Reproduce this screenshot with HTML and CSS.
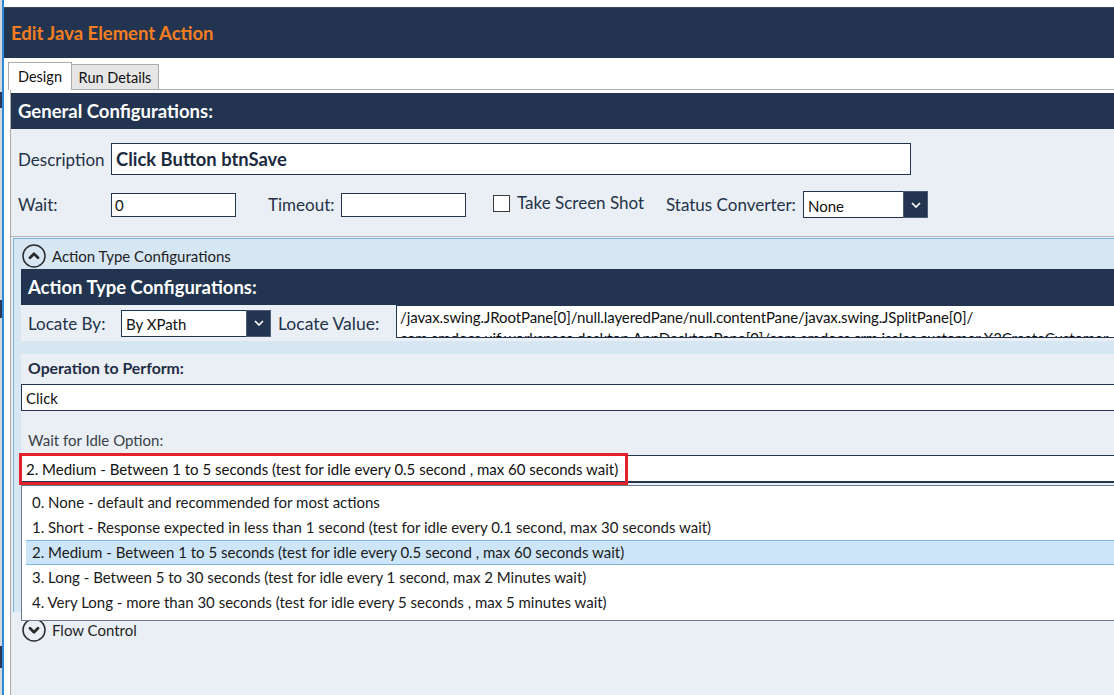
FILE: index.html
```html
<!DOCTYPE html>
<html>
<head>
<meta charset="utf-8">
<title>Edit Java Element Action</title>
<link rel="stylesheet" href="styles.css">
</head>
<body>
<div class="screen">
  <div class="desk"></div>
  <div class="desk-line"></div>
  <div class="window">
    <div class="top-gap"></div>
    <div class="titlebar"><span class="title">Edit Java Element Action</span></div>
    <div class="tabs">
      <div class="tab tab-design">Design</div>
      <div class="tab tab-run">Run Details</div>
      <div class="tab-rest"></div>
    </div>
    <div class="tabbody">
      <div class="content">
        <div class="bar">General Configurations:</div>
        <div class="general">
          <div class="row desc-row">
            <span class="lbl w93">Description</span>
            <div class="input desc-input">Click Button btnSave</div>
          </div>
          <div class="row opts-row">
            <span class="lbl w93">Wait:</span>
            <div class="input small">0</div>
            <span class="lbl lbl-timeout">Timeout:</span>
            <div class="input small"></div>
            <span class="check"></span>
            <span class="lbl lbl-shot">Take Screen Shot</span>
            <span class="lbl lbl-status">Status Converter:</span>
            <div class="select sel-status">
              <span class="sel-val">None</span>
              <span class="sel-btn"><svg viewBox="0 0 10 6" width="10" height="6"><path d="M1 1 L5 5 L9 1" fill="none" stroke="#ffffff" stroke-width="1.7"/></svg></span>
            </div>
          </div>
        </div>

        <div class="expander">
          <div class="exp-head">
            <svg class="circ" viewBox="0 0 24 24" width="24" height="24"><circle cx="12" cy="12" r="11" fill="none" stroke="#2b2b2b" stroke-width="1.5"/><path d="M8 13.8 L12 9.8 L16 13.8" fill="none" stroke="#2b2b2b" stroke-width="2.8" stroke-linecap="round" stroke-linejoin="round"/></svg>
            <span class="exp-title">Action Type Configurations</span>
          </div>
          <div class="exp-body">
            <div class="bar">Action Type Configurations:</div>
            <div class="locate-row">
              <span class="lbl w93">Locate By:</span>
              <div class="select sel-locate">
                <span class="sel-val">By XPath</span>
                <span class="sel-btn"><svg viewBox="0 0 10 6" width="10" height="6"><path d="M1 1 L5 5 L9 1" fill="none" stroke="#ffffff" stroke-width="1.7"/></svg></span>
              </div>
              <span class="lbl lbl-locval">Locate Value:</span>
              <div class="loc-value">
                <div class="loc-line">/javax.swing.JRootPane[0]/null.layeredPane/null.contentPane/javax.swing.JSplitPane[0]/</div>
                <div class="loc-line">com.amdocs.uif.workspace.desktop.AppDesktopPane[0]/com.amdocs.crm.isales.customer.X3CreateCustomer</div>
              </div>
            </div>
            <div class="gap"></div>
            <div class="op-panel">
              <div class="op-label">Operation to Perform:</div>
              <div class="op-input">Click</div>
              <div class="idle-label">Wait for Idle Option:</div>
              <div class="combo-wrap">
                <div class="combo">2. Medium - Between 1 to 5 seconds (test for idle every 0.5 second , max 60 seconds wait)</div>
                <ul class="dropdown">
                  <li class="item">0. None - default and recommended for most actions</li>
                  <li class="item">1. Short - Response expected in less than 1 second (test for idle every 0.1 second, max 30 seconds wait)</li>
                  <li class="item selected">2. Medium - Between 1 to 5 seconds (test for idle every 0.5 second , max 60 seconds wait)</li>
                  <li class="item">3. Long - Between 5 to 30 seconds (test for idle every 1 second, max 2 Minutes wait)</li>
                  <li class="item">4. Very Long - more than 30 seconds (test for idle every 5 seconds , max 5 minutes wait)</li>
                </ul>
                <div class="red-box"></div>
              </div>
            </div>
          </div>
        </div>

        <div class="exp-head flow">
          <svg class="circ" viewBox="0 0 24 24" width="24" height="24"><circle cx="12" cy="12" r="11" fill="none" stroke="#2b2b2b" stroke-width="1.5"/><path d="M8 10.2 L12 14.2 L16 10.2" fill="none" stroke="#2b2b2b" stroke-width="2.8" stroke-linecap="round" stroke-linejoin="round"/></svg>
          <span class="exp-title">Flow Control</span>
        </div>
      </div>
    </div>
  </div>
</div>
</body>
</html>
```
FILE: styles.css
```css
* { box-sizing: border-box; margin: 0; padding: 0; }
html, body { width: 1114px; height: 695px; overflow: hidden; background: #ffffff; }
body { font-family: Lato, "Open Sans", sans-serif; color: #1f2d44; }

.screen { display: flex; height: 695px; overflow: hidden; }
.desk {
  width: 2px;
  background: linear-gradient(to bottom,
    #d4d8dd 0, #d4d8dd 92px, #2a3a55 92px, #2a3a55 108px,
    #d4d8dd 108px, #d4d8dd 300px, #2a3a55 300px, #2a3a55 318px,
    #d4d8dd 318px, #d4d8dd 646px, #2a3a55 646px, #2a3a55 668px, #d4d8dd 668px);
}
.desk-line { width: 2px; background: #3089d9; }
.window { flex: 1; min-width: 0; display: flex; flex-direction: column; background: #ffffff; overflow: hidden; }

.top-gap { height: 7px; }
.titlebar {
  height: 51px; border-top: 1px solid #3d4859; background: #22344f;
  display: flex; align-items: center; padding-left: 7px;
}
.title { color: #f47e20; font-weight: 700; font-size: 18.5px; }

.tabs { height: 32px; display: flex; align-items: flex-end; padding-left: 4px; }
.tab { display: flex; align-items: center; justify-content: center; font-size: 14.5px; color: #111111; }
.tab-design { width: 64px; height: 28px; border: 1px solid #acacac; border-bottom: none; background: #ffffff; padding-bottom: 1px; }
.tab-run { width: 87px; height: 26px; border: 1px solid #acacac; border-left: none; background: #e6e6e6; }
.tab-rest { flex: 1; height: 1px; background: #acacac; }

.tabbody {
  flex: 1; min-height: 0; margin-left: 6px; border-left: 1px solid #a9a9a9;
  padding-top: 3px; display: flex; flex-direction: column; background: #ffffff;
}
.content { flex: 1; background: #eaeff5; overflow: hidden; }

.bar {
  height: 36px; background: #22344f; color: #ffffff; font-weight: 700; font-size: 18.5px;
  display: flex; align-items: center; padding-left: 7px; white-space: nowrap;
}

.general { padding: 14px 0 18px 7px; border-bottom: 1px solid #b3b3b3; }
.row { display: flex; align-items: center; white-space: nowrap; }
.desc-row { height: 32px; }
.opts-row { margin-top: 16px; height: 27px; }
.lbl { font-size: 17px; color: #243249; flex-shrink: 0; }
.w93 { width: 93px; }
.lbl-timeout { margin-left: 32px; width: 73px; }
.lbl-shot { margin-left: 7px; width: 149px; margin-bottom: 4px; }
.lbl-status { width: 137px; }
.lbl-locval { margin-left: 7px; width: 118px; font-size: 17.5px; }

.input { background: #ffffff; border: 1px solid #22344f; flex-shrink: 0; display: flex; align-items: center; }
.desc-input { width: 800px; height: 32px; font-weight: 700; font-size: 18.4px; padding-left: 4px; color: #1c2a40; }
.small { width: 125px; height: 24px; font-size: 15px; padding-left: 3px; color: #111111; }

.check { width: 17px; height: 17px; margin-left: 27px; margin-bottom: 3px; border: 1px solid #3a3a3a; background: #ffffff; flex-shrink: 0; }

.select { display: flex; height: 27px; border: 1px solid #22344f; flex-shrink: 0; background: #ffffff; }
.sel-status { width: 125px; }
.sel-locate { width: 150px; }
.sel-val { flex: 1; display: flex; align-items: center; padding-left: 4px; font-size: 15px; color: #111111; padding-top: 2px; }
.sel-btn {
  width: 25px; background: #22344f; border: 1px solid #4d5c73; margin: -1px -1px -1px 0;
  display: flex; align-items: center; justify-content: center;
}

.expander {
  margin: 1px 0 0 2px; border-top: 1px solid #7ab4e0; border-left: 1px solid #7ab4e0;
  background: #d6e6f3; padding-bottom: 6px;
}
.exp-head { height: 30px; display: flex; align-items: flex-end; padding: 0 0 1px 8px; }
.circ { flex-shrink: 0; display: block; }
.exp-title { margin-left: 6px; font-size: 15px; line-height: 24px; color: #1f1f1f; }
.flow { height: 30px; padding: 0 0 0 11px; }

.exp-body { margin-left: 7px; }
.locate-row { height: 36px; background: #eaeff5; display: flex; align-items: center; padding-left: 7px; white-space: nowrap; overflow: hidden; }
.loc-value {
  width: 760px; height: 33px; flex-shrink: 0; margin-top: -3px; border: 1px solid #22344f; background: #ffffff;
  overflow: hidden; font-size: 15px; line-height: 21px; padding: 1px 0 0 3px; color: #111111;
}
.loc-line { white-space: nowrap; letter-spacing: -0.1px; }

.gap { height: 13px; }
.op-panel { background: #eaeff5; height: 252px; padding-top: 4px; }
.op-label { font-weight: 700; font-size: 15.8px; line-height: 20px; padding-left: 7px; color: #1f2d44; }
.op-input {
  width: 1110px; height: 27px; margin-top: 6px; background: #ffffff; border: 1px solid #22344f;
  font-size: 15px; padding-left: 4px; display: flex; align-items: center; color: #111111;
}
.idle-label { margin-top: 19px; line-height: 20px; padding-left: 7px; font-size: 15px; color: #3b3f46; }
.combo-wrap { position: relative; margin-top: 5px; }
.combo {
  width: 1110px; height: 28px; background: #ffffff; border: 1px solid #22344f; border-bottom-width: 2px;
  font-size: 15px; padding-left: 4px; display: flex; align-items: center; color: #111111; white-space: nowrap;
}
.dropdown {
  position: absolute; top: 30px; left: 0; width: 1110px; height: 136px; list-style: none;
  background: #ffffff; border: 1px solid #6b798e; padding: 4px 0 5px 4px; z-index: 2;
}
.item { height: 25px; line-height: 25px; padding-left: 6px; font-size: 15px; color: #1a1a1a; white-space: nowrap; }
.item.selected { background: #cde5f8; border-top: 1px solid #7fb6ea; border-bottom: 1px solid #7fb6ea; line-height: 23px; }
.red-box {
  position: absolute; left: -2px; top: -2px; width: 609px; height: 32px;
  border: 3px solid #e4202b; z-index: 3;
}
```
